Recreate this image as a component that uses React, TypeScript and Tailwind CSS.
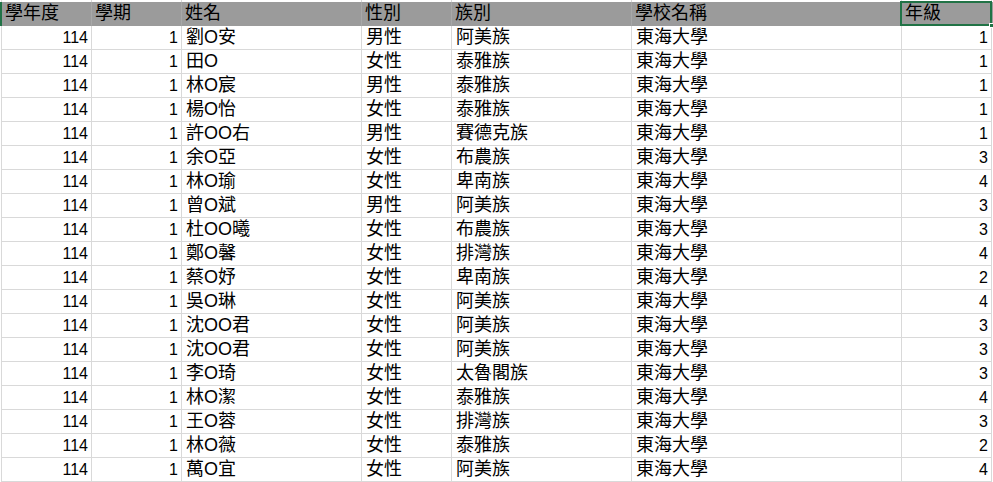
import React from "react";

type Row = [string, string, string, string];

// 姓名, 性別, 族別, 年級 — 學年度/學期/學校名稱 are the same on every row
const rows: Row[] = [
  ["劉O安", "男性", "阿美族", "1"],
  ["田O", "女性", "泰雅族", "1"],
  ["林O宸", "男性", "泰雅族", "1"],
  ["楊O怡", "女性", "泰雅族", "1"],
  ["許OO右", "男性", "賽德克族", "1"],
  ["余O亞", "女性", "布農族", "3"],
  ["林O瑜", "女性", "卑南族", "4"],
  ["曾O斌", "男性", "阿美族", "3"],
  ["杜OO曦", "女性", "布農族", "3"],
  ["鄭O馨", "女性", "排灣族", "4"],
  ["蔡O妤", "女性", "卑南族", "2"],
  ["吳O琳", "女性", "阿美族", "4"],
  ["沈OO君", "女性", "阿美族", "3"],
  ["沈OO君", "女性", "阿美族", "3"],
  ["李O琦", "女性", "太魯閣族", "3"],
  ["林O潔", "女性", "泰雅族", "4"],
  ["王O蓉", "女性", "排灣族", "3"],
  ["林O薇", "女性", "泰雅族", "2"],
  ["萬O宜", "女性", "阿美族", "4"],
];

const widths = ["w-[90px]", "w-[90px]", "w-[180px]", "w-[90px]", "w-[180px]", "w-[270px]", "w-[90px]"];
const headers = ["學年度", "學期", "姓名", "性別", "族別", "學校名稱", "年級"];

const font = "font-['Liberation_Sans','Noto_Sans_CJK_TC',sans-serif]";

const Cell = ({ w, right, children }: { w: string; right?: boolean; children?: React.ReactNode }) => (
  <div
    className={`${w} shrink-0 h-6 border-r border-b border-[#d9d9d9] flex items-center overflow-hidden whitespace-nowrap ${
      right ? "justify-end pr-[3px] text-[16px]" : "pl-[4px] text-[18px]"
    }`}
  >
    {children}
  </div>
);

export default function App() {
  return (
    <div className={`w-[993px] h-[482px] overflow-hidden bg-white text-black ${font}`}>
      {/* sliver of the row above */}
      <div className="flex h-[2px]">
        <div className="w-[2px] shrink-0 border-r border-[#d9d9d9]" />
        {widths.map((w, i) => (
          <div key={i} className={`${w} shrink-0 border-r border-[#d9d9d9]`} />
        ))}
      </div>

      {/* header */}
      <div className="flex h-6 bg-[#9b9b9b]">
        <div className="w-[2px] shrink-0 bg-[#217346]" />
        {headers.map((h, i) => (
          <div
            key={h}
            className={`${widths[i]} shrink-0 relative flex items-center pl-[3px] text-[18px] border-r border-b border-[#9b9b9b] ${
              i < 6 ? "border-r-[#a8a8a8]" : ""
            }`}
          >
            {h}
            {i === 6 && (
              <>
                <div className="absolute -left-[2px] -top-[1px] right-[-1px] bottom-[-1px] border-2 border-[#217346]" />
                <div className="absolute right-[-3px] bottom-[-3px] w-[5px] h-[5px] bg-[#217346] border border-white" />
              </>
            )}
          </div>
        ))}
      </div>

      {rows.map((r, i) => (
        <div key={i} className="flex">
          <div className="w-[2px] shrink-0 h-6 border-r border-[#d9d9d9]" />
          <Cell w={widths[0]} right>114</Cell>
          <Cell w={widths[1]} right>1</Cell>
          <Cell w={widths[2]}>{r[0]}</Cell>
          <Cell w={widths[3]}>{r[1]}</Cell>
          <Cell w={widths[4]}>{r[2]}</Cell>
          <Cell w={widths[5]}>東海大學</Cell>
          <Cell w={widths[6]} right>{r[3]}</Cell>
        </div>
      ))}
    </div>
  );
}
